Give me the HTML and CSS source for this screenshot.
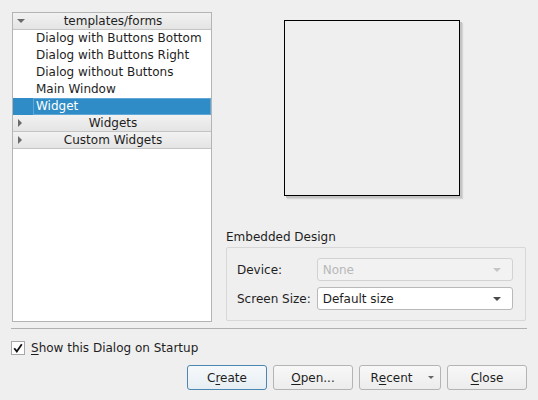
FILE: index.html
```html
<!DOCTYPE html>
<html>
<head>
<meta charset="utf-8">
<link rel="stylesheet" href="styles.css">
</head>
<body>
<div class="dialog">
  <div class="top">
    <div class="tree">
      <div class="hdr"><span class="arrow down"></span><span class="hdr-text">templates/forms</span></div>
      <div class="item">Dialog with Buttons Bottom</div>
      <div class="item">Dialog with Buttons Right</div>
      <div class="item">Dialog without Buttons</div>
      <div class="item">Main Window</div>
      <div class="item selected"><span class="focus">Widget</span></div>
      <div class="hdr"><span class="arrow right"></span><span class="hdr-text">Widgets</span></div>
      <div class="hdr"><span class="arrow right"></span><span class="hdr-text">Custom Widgets</span></div>
    </div>
    <div class="side">
      <div class="preview"></div>
      <div class="group-title">Embedded Design</div>
      <div class="group">
        <div class="form-row">
          <span class="label">Device:</span>
          <div class="combo disabled"><span>None</span><span class="caret"></span></div>
        </div>
        <div class="form-row">
          <span class="label">Screen Size:</span>
          <div class="combo"><span>Default size</span><span class="caret"></span></div>
        </div>
      </div>
    </div>
  </div>
  <div class="sep"></div>
  <label class="check"><span class="box"><svg width="12" height="12" viewBox="0 0 12 12"><path d="M2.2 6.2 L4.8 9.4 L9.8 2.2" fill="none" stroke="#111" stroke-width="1.8" stroke-linejoin="miter"/></svg></span><span><u>S</u>how this Dialog on Startup</span></label>
  <div class="buttons">
    <button class="btn default">C<u>r</u>eate</button>
    <button class="btn"><u>O</u>pen...</button>
    <button class="btn menu">R<u>e</u>cent<span class="caret small"></span></button>
    <button class="btn"><u>C</u>lose</button>
  </div>
</div>
</body>
</html>
```
FILE: styles.css
```css
* { box-sizing: border-box; }
html, body { margin: 0; padding: 0; }
body {
  background: #efefef;
  font-family: "DejaVu Sans", sans-serif;
  font-size: 12px;
  color: #1e1e1e;
  width: 538px;
  height: 400px;
  overflow: hidden;
}
.dialog {
  padding: 12px 11px 0 11px;
}
.top {
  display: flex;
  gap: 14px;
  height: 310px;
  padding-left: 1px;
}
.tree {
  width: 200px;
  height: 310px;
  background: #fff;
  border: 1px solid #b4b4b4;
  display: flex;
  flex-direction: column;
}
.hdr {
  height: 17px;
  flex: none;
  display: flex;
  align-items: center;
  background: linear-gradient(#f2f2f2, #e4e4e4);
  border-bottom: 1px solid #c4c4c4;
  position: relative;
}
.hdr-text {
  flex: 1;
  text-align: center;
  line-height: 16px;
  padding-left: 2px;
}
.arrow {
  position: absolute;
  left: 5px;
  width: 0;
  height: 0;
}
.arrow.down {
  top: 6px;
  left: 4px;
  border-left: 4px solid transparent;
  border-right: 4px solid transparent;
  border-top: 4px solid #6a6a6a;
}
.arrow.right {
  top: 4px;
  border-top: 4px solid transparent;
  border-bottom: 4px solid transparent;
  border-left: 4px solid #6a6a6a;
}
.item {
  height: 17px;
  flex: none;
  line-height: 17px;
  padding-left: 23px;
  white-space: nowrap;
}
.item.selected {
  background: #308cc6;
  color: #fff;
  padding-left: 20px;
}
.focus {
  display: block;
  height: 17px;
  padding-left: 2px;
  border: 1px solid #5ea7d6;
  line-height: 15px;
}
.side {
  width: 300px;
  display: flex;
  flex-direction: column;
}
.preview {
  margin: 8px 0 0 58px;
  width: 176px;
  height: 176px;
  border: 1px solid #000;
  background: #efefef;
  box-shadow: 2px 2px 0 #c4c4c4, 3px 3px 1px #d6d6d6;
}
.group-title {
  margin-top: 33px;
  height: 17px;
  line-height: 17px;
}
.group {
  margin-top: 1px;
  height: 74px;
  border: 1px solid #d7d7d7;
  border-radius: 2px;
  padding: 10px 12px 0 10px;
  display: flex;
  flex-direction: column;
  gap: 6px;
}
.form-row {
  display: flex;
  align-items: center;
}
.label {
  width: 80px;
}
.combo {
  width: 197px;
  height: 23px;
  border: 1px solid #b9b9b9;
  border-radius: 3px;
  background: #fff;
  display: flex;
  align-items: center;
  justify-content: space-between;
  padding: 0 11px 0 5px;
}
.combo.disabled {
  background: #f2f2f2;
  color: #b8b8b8;
  border-color: #d2d2d2;
}
.caret {
  width: 0;
  height: 0;
  border-left: 4px solid transparent;
  border-right: 4px solid transparent;
  border-top: 4px solid #4a4a4a;
}
.combo.disabled .caret { border-top-color: #c6c6c6; }
.sep {
  margin-top: 6px;
  height: 1px;
  width: 516px;
  background: #b0b0b0;
}
.check {
  display: flex;
  align-items: center;
  gap: 6px;
  margin-top: 11px;
  height: 16px;
}
.box {
  width: 14px;
  height: 14px;
  border: 1px solid #a8a8a8;
  background: #fff;
  display: flex;
  align-items: center;
  justify-content: center;
}
.box svg { display: block; }
.buttons {
  display: flex;
  justify-content: flex-end;
  gap: 6px;
  margin-top: 9px;
  width: 516px;
}
.btn {
  font-family: "DejaVu Sans", sans-serif;
  font-size: 12px;
  color: #1e1e1e;
  width: 80px;
  height: 25px;
  border: 1px solid #b4b4b4;
  border-radius: 3px;
  background: linear-gradient(#f8f8f8, #ececec);
  padding: 0;
}
.btn.default {
  border-color: #4b87b0;
  background: linear-gradient(#f6f9fb, #e6eef3);
}
.btn.menu {
  width: 82px;
  display: flex;
  align-items: center;
  justify-content: center;
  padding-left: 4px;
}
.btn.menu .caret.small {
  margin-left: 15px;
  border-left-width: 3px;
  border-right-width: 3px;
  border-top: 3px solid #666;
}
u { text-decoration-thickness: 1px; text-underline-offset: 2px; }
```
